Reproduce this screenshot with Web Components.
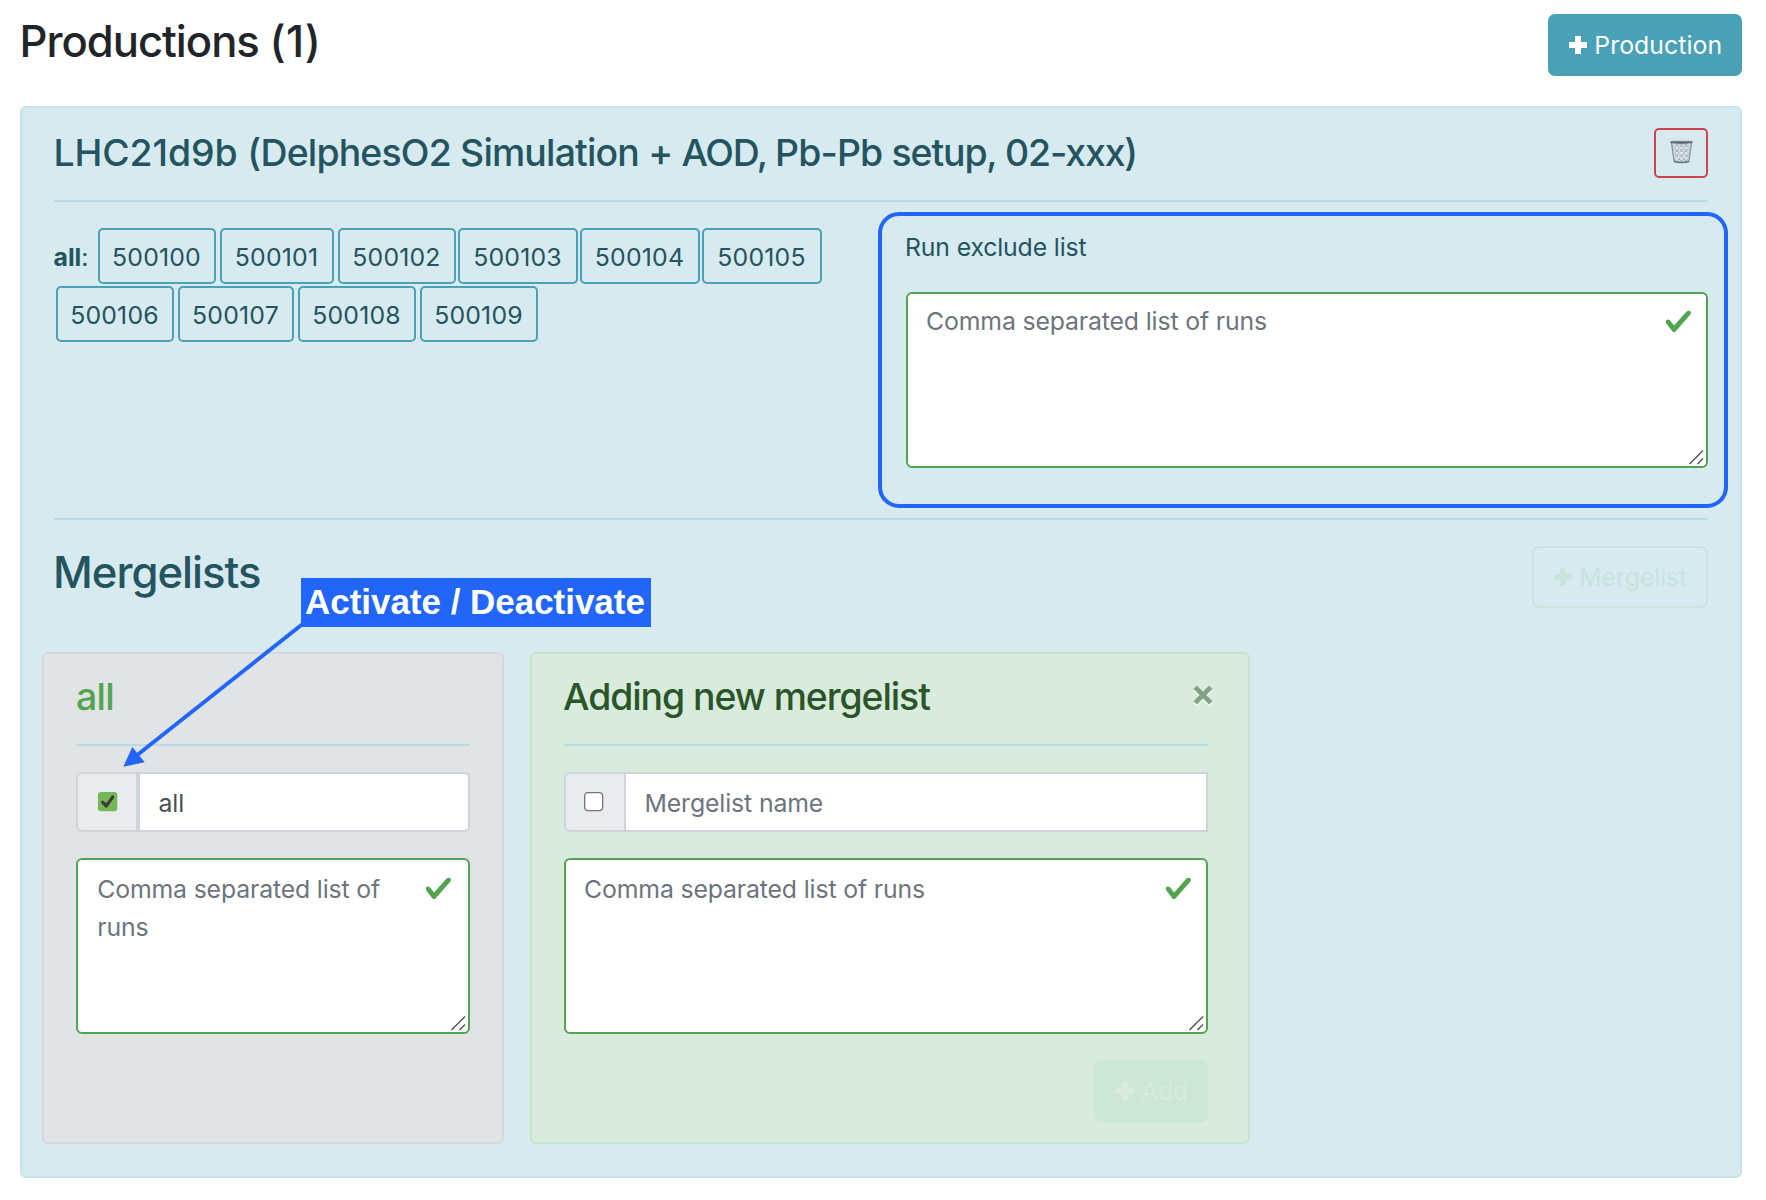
<!DOCTYPE html>
<html lang="en">
<head>
<meta charset="utf-8">
<title>Productions</title>
<style>
body{margin:0;background:#fff;color:#212529;font-family:Inter,"Liberation Sans",sans-serif;font-size:24.8px;line-height:38.4px;}
</style>
</head>
<body>
<production-page></production-page>
<script>
const define = (name, html) => {
  const tpl = document.createElement('template');
  tpl.innerHTML = '<style>*{box-sizing:border-box}:host{box-sizing:border-box}</style>' + html;
  customElements.define(name, class extends HTMLElement {
    constructor() {
      super();
      this.attachShadow({mode: 'open'}).appendChild(tpl.content.cloneNode(true));
    }
  });
};

define('rule-line', `<style>:host{display:block;height:2px;background:#b5dbe5;flex:none}</style>`);

define('plus-button', `<style>
:host{display:flex;align-items:center;height:62px;border:2px solid transparent;border-radius:7px;padding:0 0 0 20px;white-space:nowrap;flex:none}
svg{display:block;width:18px;height:18px;margin-right:var(--gap,7.3px);flex:none}
</style><svg viewBox="0 0 18 18"><path fill="currentColor" d="M6 0h6v6h6v6h-6v6H6v-6H0V6h6z"/></svg><slot></slot>`);

define('trash-button', `<style>
:host{display:block;width:54px;height:50px;border:2px solid #cb444a;border-radius:5px;flex:none;padding:10px 0 0 14px}
svg{display:block}
</style><svg width="23" height="24" viewBox="0 0 23 24">
<path d="M1.2 2 4 22.3q7.500 1.800 15 0L21.800 2z" fill="#d0dce3"/>
<path d="M2 5l15 17.500M5 3l14.500 16M9.500 3l10.500 12M14 3l7 8M3.500 12l9 11M3 17l4 5.500M21 5 6 22.500M18 3 3.500 19M13.500 3 3 15M9 3 2.500 10.500M20 12l-9.500 11M19.500 17l-4.500 5.500" stroke="#929ea8" stroke-width=".7" fill="none"/>
<path d="M2 8h19M2.500 13h18M3 18h17" stroke="#f0f5f8" stroke-width=".7"/>
<path d="M1.500 3 4.200 22M21.500 3l-2.700 19" stroke="#86919b" stroke-width="1.200" fill="none"/>
<path d="M4 21.500q7.500 2 15 0" stroke="#65717c" stroke-width="1.700" fill="none"/>
<path d="M.5 1.200h22v1.900q-11 1.400-22 0z" fill="#5b6268"/><path d="M2 1.100h19" stroke="#89939a" stroke-width=".6"/>
</svg>`);

define('run-tag', `<style>
:host{display:flex;align-items:center;justify-content:center;height:56px;border:2px solid #4aa0b5;border-radius:5px;padding:2px 1px 0 0;flex:none;letter-spacing:.2px}
</style><slot></slot>`);

define('runs-field', `<style>
:host{display:flex;align-items:flex-start;position:relative;height:176px;background:#fff;border:2px solid #53a451;border-radius:6px;color:#6c757d;padding:var(--pt,9.6px) 14.400px 0 19.200px;letter-spacing:-.145px}
.t{flex:1;margin-left:var(--tx,-1.100px)}
.ok{flex:none;width:28.800px;height:28.800px;margin-top:calc(14.100px - var(--pt,9.6px) + var(--ck,0px));margin-right:var(--cx,-.9px)}
.grip{position:absolute;right:2px;bottom:1px}
</style><div class="t"><slot></slot></div>
<svg class="ok" viewBox="0 0 8 8"><path fill="#53a451" d="M2.300 6.730.6 4.530c-.4-1.040.46-1.400 1.100-.8l1.100 1.400 3.400-3.800c.6-.63 1.600-.27 1.200.7l-4 4.600c-.43.5-.8.4-1.100.1z"/></svg>
<svg class="grip" width="16" height="16" viewBox="0 0 16 16"><path d="M1.500 15 15 1.500M9.500 15 15 9.500" stroke="#555" stroke-width="1.500"/></svg>`);

define('name-field', `<style>
:host{display:flex;height:60px;color:#6c757d;letter-spacing:-.12px}
.box{width:62px;border:2px solid #cfd4da;border-radius:6px 0 0 6px;background:#e9ebef;display:flex;align-items:center;padding:0 0 1px 20px;flex:none}
:host([joined]) .box{border-right:0;width:60px;padding-left:18px}
.in{flex:1;background:#fff;border:2px solid #cfd4da;padding:2px 0 0 18.500px;display:flex;align-items:center}
:host([rounded]) .in{border-radius:0 6px 6px 0}
:host([rounded]){color:#495057}
svg{display:block}
.on{display:none}
:host([checked]) .on{display:block}
:host([checked]) .off{display:none}
</style><div class="box">
<svg class="off" width="20" height="20" viewBox="0 0 20 20"><rect x=".65" y=".65" width="18" height="18" rx="3.300" fill="#fff" stroke="#767676" stroke-width="1.300"/></svg>
<svg class="on" width="20" height="20" viewBox="0 0 20 20"><rect width="19.300" height="19.300" rx="3" fill="#76b856"/><path d="m4.600 10.200 3.500 3.800 6.700-9" fill="none" stroke="#3b3b3b" stroke-width="3.200" stroke-linecap="round" stroke-linejoin="round"/></svg>
</div><div class="in"><slot></slot></div>`);

define('merge-card', `<style>
:host{display:flex;flex-direction:column;height:492px;border:2px solid var(--edge);border-radius:6px;background:var(--fill);padding:19.500px 32px 0}
.head{display:flex;justify-content:space-between;height:70.500px;font-size:37.400px;font-weight:500;line-height:46px;color:var(--title)}
.body{display:flex;flex-direction:column;gap:26px;padding-top:26px}
</style><div class="head"><slot name="title"></slot><slot name="action"></slot></div><rule-line></rule-line><div class="body"><slot></slot></div>`);

define('close-mark', `<style>:host{display:block;width:21px;height:24px;margin:11.500px -5.500px 0 0}svg{display:block}</style>
<svg width="21" height="24" viewBox="0 0 21 24"><path d="M2.200 4.500l15.600 15.600M17.800 4.500l-15.600 15.600" stroke="#fff" stroke-width="4.800" opacity=".8" transform="translate(0 -.2)"/><path d="M2.200 2.300l15.600 15.600M17.800 2.300l-15.600 15.600" stroke="#84a386" stroke-width="4.800"/></svg>`);

define('note-layer', `<style>
:host{display:block;position:absolute;inset:0;pointer-events:none}
.frame{position:absolute;left:878px;top:212px;width:850px;height:296px;border:4px solid #2166f8;border-radius:21px}
.label{position:absolute;left:301px;top:578px;width:350px;height:49px;background:#2166f8;color:#fff;font:700 35px/48px "Liberation Sans",Arial,sans-serif;padding-left:4px;letter-spacing:-.03px;white-space:nowrap}
svg{position:absolute;left:0;top:0}
</style><div class="frame"></div>
<svg width="700" height="800"><path d="M302 624.500 136 756" stroke="#2166f8" stroke-width="4"/><path d="M123.300 766.700 132.300 747l12.400 15.300z" fill="#2166f8"/></svg>
<div class="label">Activate / Deactivate</div>`);

define('production-card', `<style>
:host{display:flex;flex-direction:column;height:1072px;border:2px solid #c5e4ea;border-radius:6px;background:#d6eaef;color:#24545f;padding:20px 32px 0}
.head{display:flex;justify-content:space-between;align-items:center;margin-bottom:22px;font-size:37.400px;font-weight:500;letter-spacing:-.820px}
.head .ttl{margin-left:-.5px}
.w1{letter-spacing:-.1px}.w2{letter-spacing:-1.300px}.w3{letter-spacing:-.819px}.w4{letter-spacing:-1.130px}
.mid{display:flex;justify-content:space-between;height:316px;padding-top:26px}
.runs{display:flex;flex-direction:column;gap:2px}
.row{display:flex;align-items:center;padding-left:2px}
.row.first{padding-left:0}
.all{width:44px;white-space:nowrap;margin:2px 0 0 -.5px;margin-right:.5px}
.g2{margin-left:2px}.g4{margin-left:4px}
.ex{width:802px;display:flex;flex-direction:column}
.ex label{letter-spacing:-.15px;margin:0 0 25.600px -1px}
.ex runs-field{--pt:8px;--ck:-1px}
.mh{display:flex;justify-content:space-between;align-items:flex-start;margin-top:26px;margin-bottom:44px}
.mh h3{margin:0 0 0 -1px;font-size:43.600px;font-weight:500;line-height:54px;height:54px;letter-spacing:-1px}
.mh plus-button{width:176px;border-color:#c9e3df;color:#c9e3df;letter-spacing:-.1px}
.lists{display:flex;gap:26px;margin-left:-12px}
.grey{width:462px;--fill:#e2e3e5;--edge:#d7d8dc;--title:#53a451}
.grey runs-field{--tx:0px;--cx:1.200px}
.green{width:720px;--fill:#d9ebdc;--edge:#c9e4cc;--title:#2a5529;padding-right:40px}
.add{width:114px;align-self:flex-end;background:#cce6d7;color:#d9ebdc;letter-spacing:-.6px}
</style>
<div class="head"><div class="ttl"><span class="w1">LHC21d9b </span>(DelphesO2 Simulation + <span class="w2">AOD, </span><span class="w3">Pb-Pb </span><span class="w4">setup, 02-xxx)</span></div><trash-button></trash-button></div>
<rule-line></rule-line>
<div class="mid">
<div class="runs">
<div class="row first"><div class="all"><b>all</b>:</div><run-tag style="width:118px">500100</run-tag><run-tag class="g4" style="width:114px">500101</run-tag><run-tag class="g4" style="width:118px">500102</run-tag><run-tag class="g2" style="width:120px">500103</run-tag><run-tag class="g2" style="width:120px">500104</run-tag><run-tag class="g2" style="width:120px">500105</run-tag></div>
<div class="row"><run-tag style="width:118px">500106</run-tag><run-tag class="g4" style="width:116px">500107</run-tag><run-tag class="g4" style="width:118px">500108</run-tag><run-tag class="g4" style="width:118px">500109</run-tag></div>
</div>
<div class="ex"><label>Run exclude list</label><runs-field>Comma separated list of runs</runs-field></div>
</div>
<rule-line></rule-line>
<div class="mh"><h3>Mergelists</h3><plus-button>Mergelist</plus-button></div>
<div class="lists">
<merge-card class="grey"><span slot="title" style="letter-spacing:-.7px">all</span><name-field checked rounded>all</name-field><runs-field>Comma separated list of runs</runs-field></merge-card>
<merge-card class="green"><span slot="title" style="letter-spacing:-1.060px;margin-left:-1px">Adding new mergelist</span><close-mark slot="action"></close-mark><name-field joined>Mergelist name</name-field><runs-field>Comma separated list of runs</runs-field><plus-button class="add">Add</plus-button></merge-card>
</div>`);

define('production-page', `<style>
:host{display:block;position:relative;height:1200px;padding:14px 24px 0 20px;overflow:hidden}
.top{display:flex;justify-content:space-between;align-items:flex-start;margin-bottom:30px}
h3{margin:0 0 0 -.5px;font-size:43.600px;font-weight:500;line-height:55px;height:54px;letter-spacing:-1.020px}
h3 span{letter-spacing:.500px}
.top plus-button{width:194px;padding-left:19px;background:#4aa0b5;color:#fff;letter-spacing:.06px}
</style>
<div class="top"><h3>Productions <span>(1)</span></h3><plus-button>Production</plus-button></div>
<production-card></production-card>
<note-layer></note-layer>`);
</script>
</body>
</html>
